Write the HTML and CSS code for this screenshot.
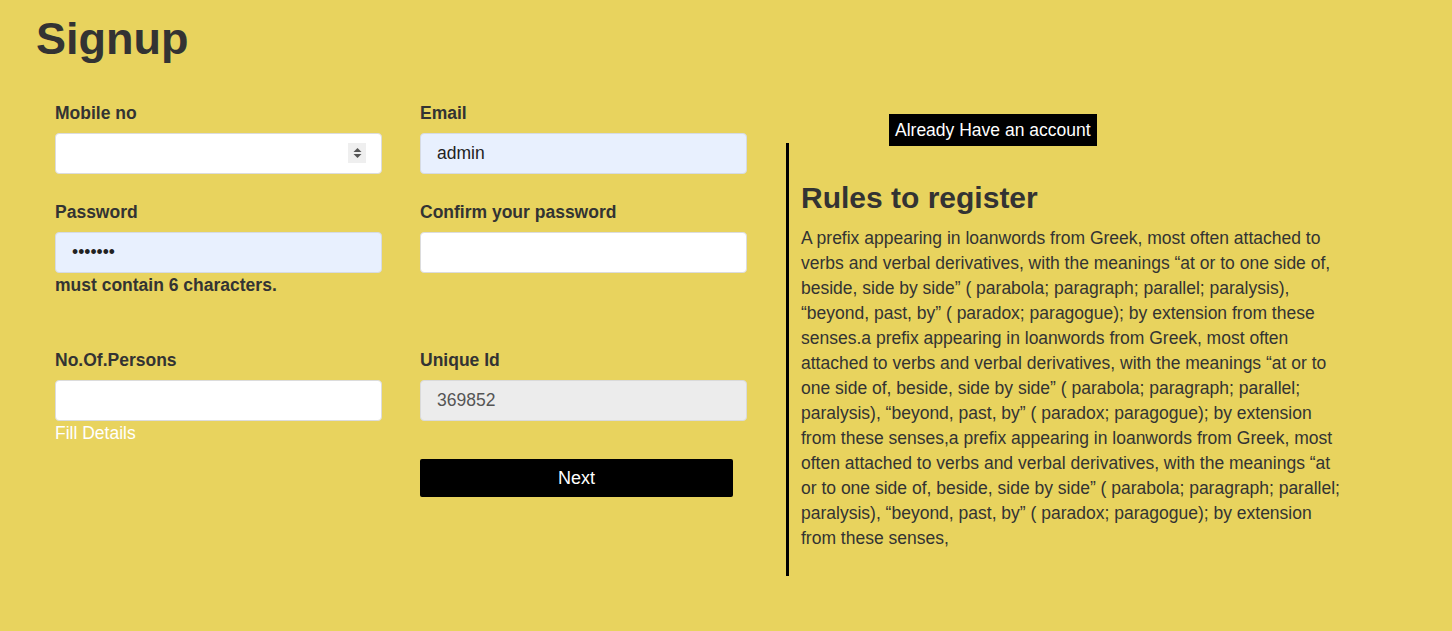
FILE: index.html
```html
<!DOCTYPE html>
<html lang="en">
<head>
<meta charset="utf-8">
<title>Signup</title>
<link rel="stylesheet" href="styles.css">
</head>
<body>
<div class="page">
  <h1 class="title">Signup</h1>
  <div class="main">
    <form class="form-grid">
      <div class="group">
        <label class="label">Mobile no</label>
        <div class="field-wrap">
          <input class="input" type="text" value="">
          <span class="spinner">
            <svg width="11" height="14" viewBox="0 0 11 14"><path d="M5.5 2 L9.5 6 H1.5 Z" fill="#555"/><path d="M1.5 8 H9.5 L5.5 12 Z" fill="#555"/></svg>
          </span>
        </div>
      </div>
      <div class="group">
        <label class="label">Email</label>
        <input class="input input-auto" type="text" value="admin">
      </div>
      <div class="group">
        <label class="label">Password</label>
        <input class="input input-auto" type="password" value="1234567">
        <div class="hint">must contain 6 characters.</div>
      </div>
      <div class="group">
        <label class="label">Confirm your password</label>
        <input class="input" type="password" value="">
      </div>
      <div class="group">
        <label class="label">No.Of.Persons</label>
        <input class="input" type="text" value="">
        <div class="fill">Fill Details</div>
      </div>
      <div class="group">
        <label class="label">Unique Id</label>
        <input class="input input-disabled" type="text" value="369852" readonly>
        <button type="button" class="next">Next</button>
      </div>
    </form>
    <aside class="panel">
      <button type="button" class="account">Already Have an account</button>
      <div class="rules">
        <h2 class="rules-title">Rules to register</h2>
        <p class="rules-text">A prefix appearing in loanwords from Greek, most often attached to verbs and verbal derivatives, with the meanings “at or to one side of, beside, side by side” ( parabola; paragraph; parallel; paralysis), “beyond, past, by” ( paradox; paragogue); by extension from these senses.a prefix appearing in loanwords from Greek, most often attached to verbs and verbal derivatives, with the meanings “at or to one side of, beside, side by side” ( parabola; paragraph; parallel; paralysis), “beyond, past, by” ( paradox; paragogue); by extension from these senses,a prefix appearing in loanwords from Greek, most often attached to verbs and verbal derivatives, with the meanings “at or to one side of, beside, side by side” ( parabola; paragraph; parallel; paralysis), “beyond, past, by” ( paradox; paragogue); by extension from these senses,</p>
      </div>
    </aside>
  </div>
</div>
</body>
</html>
```

FILE: styles.css
```css
html, body {
  margin: 0;
  padding: 0;
  background: #e8d35e;
  height: 100%;
}
body {
  font-family: "Liberation Sans", Arial, sans-serif;
  color: #333;
}
.page {
  padding: 13px 36px 0 36px;
}
.title {
  margin: 0;
  font-size: 45px;
  line-height: 52px;
  font-weight: 700;
  color: #333;
}
.main {
  display: flex;
  align-items: flex-start;
  margin-top: 36px;
  padding-left: 19px;
  gap: 39px;
}
.form-grid {
  display: grid;
  grid-template-columns: 327px 327px;
  column-gap: 38px;
  row-gap: 26px;
  margin: 0;
}
.group {
  display: flex;
  flex-direction: column;
  align-items: flex-start;
}
.label {
  display: block;
  font-size: 17.5px;
  font-weight: 700;
  line-height: 24px;
  margin-bottom: 8px;
  color: #333;
}
.field-wrap {
  position: relative;
  width: 327px;
}
.input {
  box-sizing: border-box;
  width: 327px;
  height: 41px;
  border: 1px solid #dcdcdc;
  border-radius: 4px;
  background: #fff;
  padding: 0 16px;
  font-family: "Liberation Sans", Arial, sans-serif;
  font-size: 17.5px;
  color: #222;
  outline: none;
}
.input-auto {
  background: #e8f0fe;
  border-color: #d6dbe3;
}
.input-disabled {
  background: #ececec;
  border-color: #dadada;
  color: #555;
}
.spinner {
  position: absolute;
  right: 16px;
  top: 10px;
  width: 18px;
  height: 20px;
  background: #efefef;
  display: flex;
  align-items: center;
  justify-content: center;
}
.hint {
  font-size: 17.5px;
  font-weight: 700;
  line-height: 24px;
  margin-bottom: 25px;
  color: #333;
}
.fill {
  font-size: 17.5px;
  line-height: 24px;
  color: #fff;
}
.next {
  margin-top: 38px;
  width: 313px;
  height: 38px;
  background: #000;
  color: #fff;
  border: none;
  border-radius: 2px;
  font-family: "Liberation Sans", Arial, sans-serif;
  font-size: 18px;
  cursor: pointer;
}
.panel {
  display: flex;
  flex-direction: column;
  align-items: flex-start;
}
.account {
  margin: 13px 0 -3px 103px;
  height: 32px;
  padding: 0 6px;
  background: #000;
  color: #fff;
  border: none;
  border-radius: 0;
  font-family: "Liberation Sans", Arial, sans-serif;
  font-size: 17.5px;
  cursor: pointer;
}
.rules {
  border-left: 3px solid #000;
  padding: 37px 0 25px 12px;
  width: 539px;
}
.rules-title {
  margin: 0 0 10px 0;
  font-size: 30px;
  line-height: 36px;
  font-weight: 700;
  color: #333;
}
.rules-text {
  margin: 0;
  font-size: 17.5px;
  line-height: 25px;
  color: #333;
}
```
